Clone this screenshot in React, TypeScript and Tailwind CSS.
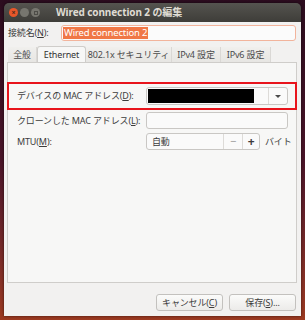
const font = { fontFamily: '"Noto Sans", "Noto Sans CJK JP", sans-serif' };

function U({ children }: { children: React.ReactNode }) {
  return <span className="underline underline-offset-[1px]">{children}</span>;
}

function Tab({ label, active, w }: { label: string; active?: boolean; w: string }) {
  if (active) {
    return (
      <div className={`${w} -mb-px flex items-center justify-center whitespace-nowrap rounded-t-[3px] border border-b-0 border-[#cfcdca] bg-[#f7f7f6] text-[#333]`}>
        {label}
      </div>
    );
  }
  return (
    <div className={`${w} mt-[1px] flex items-center justify-center whitespace-nowrap border-r border-[#dad8d5] bg-gradient-to-b from-[#f0efed] to-[#e7e6e3] text-[#4a4a4a]`}>
      {label}
    </div>
  );
}

export default function App() {
  return (
    <div
      className="h-[320px] w-[305px] overflow-hidden bg-gradient-to-b from-[#2c0d1f] via-[#4a1428] to-[#9c3a20] pl-[4px] pt-[3px]"
      style={font}
    >
      <div className="flex h-[313px] w-[297px] flex-col overflow-hidden rounded-t-[5px] shadow-[0_0_3px_rgba(0,0,0,0.6)]">
        {/* title bar */}
        <div className="flex h-[19px] items-center bg-gradient-to-b from-[#55544f] to-[#3e3d39] pl-[5px]">
          <div className="flex h-[9px] w-[9px] items-center justify-center rounded-full bg-[#e8572a] text-[7px] font-bold leading-none text-[#4a2a1c]">×</div>
          <div className="ml-[2px] h-[9px] w-[9px] rounded-full bg-[#77766f]" />
          <div className="ml-[2px] flex h-[9px] w-[9px] items-center justify-center rounded-full bg-[#77766f]">
            <div className="h-[4px] w-[4px] border border-[#4d4c47]" />
          </div>
          <div className="ml-[16px] whitespace-nowrap text-[10px] font-bold tracking-[-0.1px] text-[#dfdbd2]">Wired connection 2 の編集</div>
        </div>

        {/* body */}
        <div className="flex flex-1 flex-col whitespace-nowrap bg-[#f2f1f0] pl-[3px] text-[9px] tracking-[-0.15px] text-[#3c3c3c]">
          <div className="mt-[3px] flex h-[16px] items-center">
            <div className="w-[54px] pl-[1px]">
              接続名(<U>N</U>):
            </div>
            <div className="flex h-[16px] w-[235px] items-center rounded-[3px] border border-[#f2b49c] bg-[#fbfbfb] pl-[1px]">
              <span className="bg-[#f07746] px-[1px] text-[9.5px] leading-[12px] text-white">Wired connection 2</span>
            </div>
          </div>

          {/* tabs */}
          <div className="mt-[5px] flex h-[16px] pl-[1px]">
            <Tab label="全般" w="w-[29px]" />
            <Tab label="Ethernet" active w="w-[49px]" />
            <Tab label="802.1x セキュリティ" w="w-[86px]" />
            <Tab label="IPv4 設定" w="w-[49px]" />
            <Tab label="IPv6 設定" w="w-[50px]" />
          </div>

          {/* panel */}
          <div className="h-[221px] w-[290px] border border-[#cfcdca] bg-[#f7f7f6] pt-[19px]">
            <div className="-ml-px flex h-[28px] w-[290px] items-center border-[2px] border-[#e8141c]">
              <div className="w-[137px] pl-[8px]">
                デバイスの MAC アドレス(<U>D</U>):
              </div>
              <div className="flex h-[18px] w-[142px] items-center rounded-[3px] border border-[#c9c7c4] bg-[#fafafa]">
                <div className="ml-[1px] h-[14px] w-[106px] bg-black" />
                <div className="ml-[14px] h-full w-px bg-[#dddbd8]" />
                <div className="flex flex-1 items-center justify-center">
                  <div className="h-0 w-0 border-x-[3px] border-t-[3px] border-x-transparent border-t-[#4a4a4a]" />
                </div>
              </div>
            </div>

            <div className="mt-[2px] flex h-[17px] items-center">
              <div className="w-[138px] pl-[9px]">
                クローンした MAC アドレス(<U>L</U>):
              </div>
              <div className="h-[17px] w-[142px] rounded-[3px] border border-[#c9c7c4] bg-[#fafafa]" />
            </div>

            <div className="mt-[4px] flex h-[17px] items-center">
              <div className="w-[138px] pl-[9px]">
                MTU(<U>M</U>):
              </div>
              <div className="flex h-[17px] w-[114px] items-center rounded-[3px] border border-[#c9c7c4] bg-[#fafafa]">
                <div className="w-[76px] pl-[5px]">自動</div>
                <div className="flex h-full w-[19px] items-center justify-center border-l border-[#dddbd8] text-[11px] text-[#9a9a9a]">−</div>
                <div className="flex h-full flex-1 items-center justify-center border-l border-[#dddbd8] text-[12px] font-bold text-[#3c3c3c]">+</div>
              </div>
              <div className="ml-[5px]">バイト</div>
            </div>
          </div>

          {/* buttons */}
          <div className="mt-[11px] flex justify-end gap-[6px] pr-[5px]">
            <div className="flex h-[17px] w-[67px] items-center justify-center rounded-[3px] border border-[#c3c1be] bg-gradient-to-b from-[#fbfbfa] to-[#ecebe9]">
              キャンセル(<U>C</U>)
            </div>
            <div className="flex h-[17px] w-[67px] items-center justify-center rounded-[3px] border border-[#c3c1be] bg-gradient-to-b from-[#fbfbfa] to-[#ecebe9]">
              保存(<U>S</U>)...
            </div>
          </div>
        </div>
      </div>
    </div>
  );
}
